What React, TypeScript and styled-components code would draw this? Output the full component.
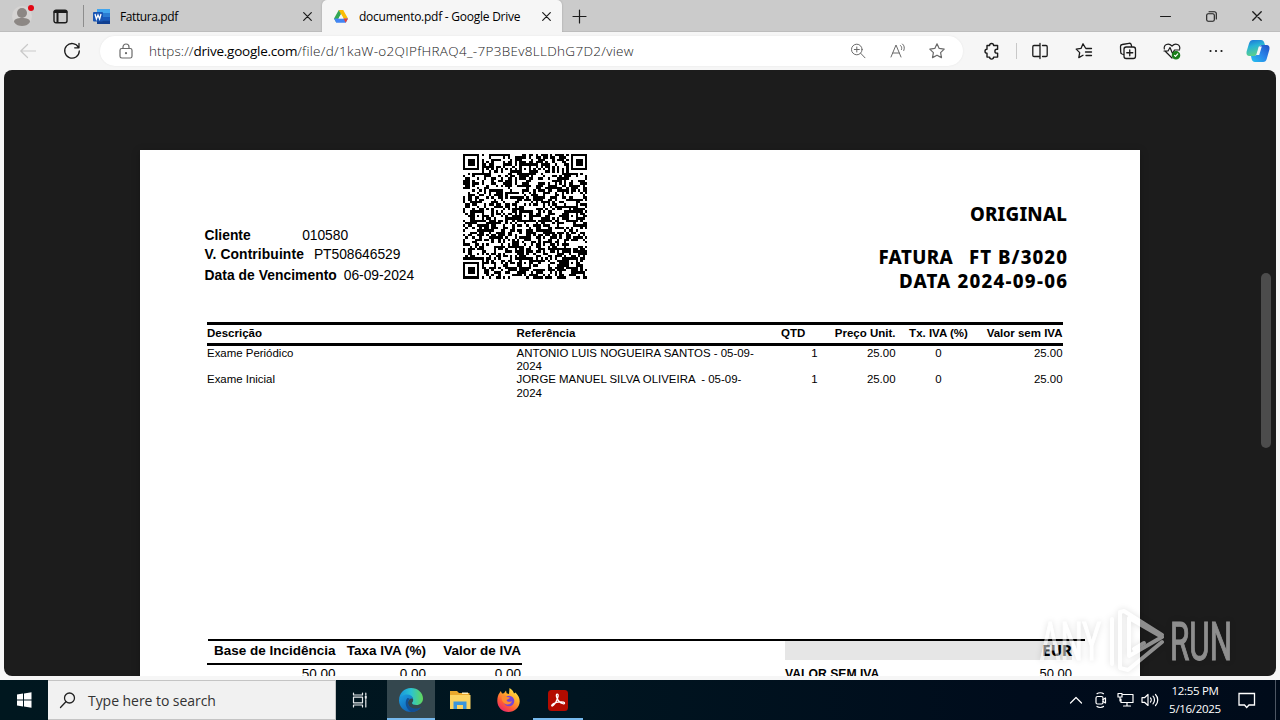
import React from "react";
import styled, { createGlobalStyle, css } from "styled-components";

const GlobalStyle = createGlobalStyle`
    * {
        box-sizing: border-box;
    }
    body {
        margin: 0;
        width: 1280px;
        height: 720px;
        overflow: hidden;
        background-color: #f6f6f6;
        font-family: "Open Sans", "Noto Sans", sans-serif;
    }
    svg {
        display: block;
        flex: none;
    }
`

const Screen = styled.div`
    position: relative;
    display: flex;
    flex-direction: column;
    width: 1280px;
    height: 720px;
    overflow: hidden;
`

/* browser tabs */
const TabStrip = styled.header`
    display: flex;
    height: 32px;
    flex: none;
    background-color: #cbcbcb;
    box-shadow: inset 0 -1px 0 #bdbdbd;
`
const TabTools = styled.div`
    display: flex;
    align-items: center;
    width: 84px;
    padding-left: 12px;
    gap: 19px;
    border-right: 1px solid #8d8d8d;
    margin: 5px 0;
    height: 22px;
`
const Tab = styled.div<{ $active?: boolean; $width: number }>`
    display: flex;
    align-items: center;
    width: ${(props) => props.$width}px;
    height: 32px;
    padding: 0 10px 0 9px;
    font-size: 12px;
    color: #1a1a1a;
    ${(props) => props.$active && css`
        background-color: #f6f6f6;
        padding: 0 11px 0 12px;
        border-radius: 5px 5px 0 0;
        box-shadow: 0 0 2px #9c9c9c;
    `}
`
const TabTitle = styled.span<{ $spacing: number; $gap: number }>`
    flex: 1;
    margin-left: ${(props) => props.$gap}px;
    letter-spacing: ${(props) => props.$spacing}px;
    white-space: nowrap;
    color: #000;
`
const NewTab = styled.div`
    display: flex;
    align-items: center;
    padding-left: 10px;
    flex: 1;
`
const WindowButtons = styled.div`
    display: flex;
    align-items: center;
    gap: 35px;
    padding-right: 18px;
`

/* address row */
const Toolbar = styled.nav`
    display: flex;
    align-items: center;
    height: 38px;
    flex: none;
    padding: 0 9px 0 20px;
    background-color: #f6f6f6;
`
const NavButtons = styled.div`
    display: flex;
    align-items: center;
    gap: 27px;
    width: 80px;
`
const AddressBar = styled.div`
    display: flex;
    align-items: center;
    width: 863px;
    height: 30px;
    padding: 0 17px 0 19px;
    border-radius: 15px;
    background-color: #fff;
    box-shadow: 0 0 2px #e4e4e4;
`
const Url = styled.div`
    flex: 1;
    margin-left: 16px;
    font-size: 13.5px;
    font-weight: 300;
    letter-spacing: 0.31px;
    white-space: nowrap;
    color: #222;
    i {
        font-style: normal;
        letter-spacing: 0.1px;
    }
    b {
        font-weight: 400;
        letter-spacing: -0.25px;
        color: #000;
    }
`
const AddressIcons = styled.div`
    display: flex;
    align-items: center;
    gap: 22px;
`
const BrowserIcons = styled.div`
    display: flex;
    align-items: center;
    flex: 1;
    gap: 26px;
    padding-left: 20px;
`
const Separator = styled.i`
    width: 1px;
    height: 16px;
    margin: 0 -12px 0 -11px;
    background-color: #c8c8c8;
`
const MenuDots = styled.div`
    margin: 0 -3px 0 2px;
`

/* document viewer */
const Viewer = styled.main`
    position: relative;
    height: 606px;
    flex: none;
    margin: 0 4px;
    padding-top: 80px;
    overflow: hidden;
    border-radius: 8px;
    background-color: #1c1c1c;
`
const Sheet = styled.article`
    display: flex;
    flex-direction: column;
    width: 1000px;
    height: 700px;
    margin: 0 auto;
    background-color: #fff;
    color: #000;
    font-family: "Liberation Sans", Arial, sans-serif;
    box-shadow: 0 2px 8px rgba(0, 0, 0, 0.25);
`
const ScrollThumb = styled.div`
    position: absolute;
    top: 203px;
    right: 5px;
    width: 10px;
    height: 175px;
    border-radius: 5px;
    background-color: #4c4c4c;
`
const SheetHead = styled.section`
    display: grid;
    grid-template-columns: 258px 1fr 300px;
    height: 172px;
    padding: 0 73px 0 64.5px;
`
const ClientInfo = styled.div`
    padding-top: 76px;
    font-size: 13.85px;
`
const ClientRow = styled.div<{ $height: number; $gap: number; $spacing?: number }>`
    display: flex;
    height: ${(props) => props.$height}px;
    gap: ${(props) => props.$gap}px;
    line-height: 18px;
    white-space: nowrap;
    b {
        letter-spacing: ${(props) => props.$spacing || 0}px;
    }
    span {
        letter-spacing: -0.05px;
    }
`
const QrBox = styled.div`
    padding-top: 4px;
`
const InvoiceTitle = styled.div`
    padding-top: 52px;
    text-align: right;
    font-family: "Noto Sans", Tahoma, sans-serif;
    font-weight: 800;
    font-size: 18.7px;
    line-height: 24.5px;
    white-space: pre;
`
const TitleLine = styled.div<{ $spacing: number; $value?: number; $after?: number }>`
    letter-spacing: ${(props) => props.$spacing}px;
    margin-right: ${(props) => -(props.$value || props.$spacing)}px;
    margin-bottom: ${(props) => props.$after || 0}px;
    span {
        letter-spacing: ${(props) => props.$value}px;
    }
`
const ItemGrid = styled.div`
    display: grid;
    grid-template-columns: 309.5px 264.5px 36.5px 78px 86px 81px;
    white-space: pre;
`
const Items = styled.section`
    width: 856px;
    margin-left: 67px;
    height: 317px;
    font-size: 11.45px;
    line-height: 13.2px;
`
const ItemHead = styled(ItemGrid)`
    height: 24px;
    border-top: 3px solid #000;
    border-bottom: 3px solid #000;
    margin-bottom: 1px;
    font-weight: 700;
    font-size: 11.5px;
    line-height: 16px;
`
const Cell = styled.div<{ $align?: string }>`
    text-align: ${(props) => props.$align || "left"};
`
const Totals = styled.section`
    display: flex;
    justify-content: space-between;
    width: 877px;
    margin-left: 68px;
    border-top: 2px solid #000;
    padding-right: 13px;
`
const TaxTable = styled.div`
    width: 315px;
    margin-left: -1px;
    font-size: 13.5px;
`
const TaxRow = styled.div<{ $head?: boolean }>`
    display: grid;
    grid-template-columns: 128.5px 90.5px 95px;
    text-align: right;
    white-space: nowrap;
    height: 24px;
    line-height: 17px;
    ${(props) => props.$head && css`
        height: 24px;
        line-height: 19px;
        font-weight: 700;
        border-bottom: 2px solid #000;
    `}
`
const SumBox = styled.div`
    width: 287px;
    font-size: 13px;
`
const Currency = styled.div`
    height: 19px;
    background-color: #e6e6e6;
    text-align: right;
    font-family: "Noto Sans", Tahoma, sans-serif;
    font-weight: 800;
    font-size: 15px;
    line-height: 18px;
`
const SumRow = styled.div`
    display: flex;
    justify-content: space-between;
    padding-top: 6px;
    line-height: 16px;
    b {
        font-size: 12.2px;
    }
`
const Watermark = styled.svg`
    position: absolute;
    left: 1032px;
    top: 600px;
    filter: drop-shadow(0 0 3px rgba(0, 0, 0, 0.25));
`

/* windows taskbar */
const Taskbar = styled.footer`
    display: flex;
    height: 40px;
    flex: none;
    margin-top: 4px;
    background: linear-gradient(90deg, #00171f 0%, #001520 45%, #000c1c 80%, #000b1a 100%);
    color: #fff;
`
const StartButton = styled.div`
    display: flex;
    align-items: center;
    justify-content: center;
    width: 48px;
`
const SearchBox = styled.div`
    display: flex;
    align-items: center;
    width: 288px;
    padding-left: 11px;
    gap: 12px;
    background-color: #f1f1f1;
    border: 1px solid #c4c4c4;
    border-left: 0;
    color: #333;
    font-size: 14px;
    letter-spacing: -0.05px;
`
const TaskButton = styled.div<{ $width?: number; $state?: string }>`
    display: flex;
    align-items: center;
    justify-content: center;
    width: ${(props) => props.$width || 49}px;
    background-color: ${(props) => props.$state === "active" ? "#34474e" : "transparent"};
    box-shadow: ${(props) => props.$state ? "inset 0 -2px 0 #76b9ed" : "none"};
`
const TaskViewButton = styled(TaskButton)`
    padding-right: 4px;
`
const Tray = styled.div`
    display: flex;
    align-items: center;
    margin-left: auto;
    gap: 7px;
`
const Clock = styled.div`
    width: 54px;
    margin: 0 9px 0 2px;
    text-align: center;
    font-size: 11.5px;
    line-height: 18px;
    letter-spacing: -0.3px;
    white-space: nowrap;
`
const DesktopEdge = styled.i`
    width: 5px;
    height: 40px;
    margin-left: 12px;
    border-left: 1px solid #4d5663;
`

const Icon = ({ w = 18, h = w, box, color = "#1b1b1b", stroke = 1.2, children }: any): JSX.Element => (
    <svg width={w} height={h} viewBox={box || `0 0 ${w} ${h}`} fill="none" stroke={color} strokeWidth={stroke} strokeLinecap="round" strokeLinejoin="round">
        {children}
    </svg>
)

const CloseIcon = ({ size = 9 }): JSX.Element => (
    <Icon w={size} box="0 0 9 9"><path d="M.7.7l7.6 7.6M8.3.7L.7 8.3" /></Icon>
)

const STAR = "M9 1.8l2.2 4.6 5 .7-3.6 3.5.9 5L9 13.2l-4.5 2.4.9-5L1.8 7.1l5-.7z";

const QR_SIZE = 53;

// finder, timing and alignment marks are fixed, the rest is filled by a seeded generator
function buildQrPath(): string {
    let seed = 580646529;
    let path = "";
    const ring = (dx: number, dy: number) => Math.max(Math.abs(dx), Math.abs(dy));
    const marks = [6, 26, 46];
    for (let y = 0; y < QR_SIZE; y++) {
        for (let x = 0; x < QR_SIZE; x++) {
            seed = (Math.imul(seed, 1664525) + 1013904223) >>> 0;
            let dark = (seed >>> 16) % 100 < 50;
            if (x === 6 || y === 6) dark = (x + y) % 2 === 0;
            marks.forEach((my) => marks.forEach((mx) => {
                const d = ring(x - mx, y - my);
                if (d <= 2) dark = d !== 1;
            }));
            [[3, 3], [QR_SIZE - 4, 3], [3, QR_SIZE - 4]].forEach(([cx, cy]) => {
                const d = ring(x - cx, y - cy);
                if (d <= 4) dark = d !== 2 && d !== 4;
            });
            if (dark) path += `M${x} ${y}h1v1h-1z`;
        }
    }
    return path;
}

const qrPath = buildQrPath();

const items = [
    { name: "Exame Periódico", ref: "ANTONIO LUIS NOGUEIRA SANTOS - 05-09-\n2024", qty: "1", price: "25.00", tax: "0", total: "25.00" },
    { name: "Exame Inicial", ref: "JORGE MANUEL SILVA OLIVEIRA  - 05-09-\n2024", qty: "1", price: "25.00", tax: "0", total: "25.00" },
];

function Tabs(): JSX.Element {
    return (
        <TabStrip>
            <TabTools>
                <svg width="22" height="24" viewBox="0 0 22 24">
                    <circle cx="10" cy="12" r="10" fill="#d6d4d3" />
                    <circle cx="10" cy="9" r="5" fill="#8c8784" />
                    <path d="M2 18c0-3 3-4 8-4s8 1 8 4c-2 3-5 4-8 4s-6-1-8-4z" fill="#8c8784" />
                    <circle cx="19" cy="4" r="3" fill="#e30613" />
                </svg>
                <Icon w={15} stroke={1.4}>
                    <rect x="1" y="1.2" width="13" height="12.6" rx="2" />
                    <path d="M1.5 3h12M4.5 4v9" strokeWidth="2" />
                </Icon>
            </TabTools>
            <Tab $width={238}>
                <svg width="17" height="17" viewBox="0 0 17 17">
                    <rect x="4" y="1" width="13" height="15" rx="1" fill="#2b7cd3" />
                    <path d="M4 1h13v4H4z" fill="#41a5ee" />
                    <path d="M4 9h13v3.5H4z" fill="#185abd" />
                    <path d="M4 12.5h13V16H4z" fill="#103f91" />
                    <rect y="4" width="10" height="9.5" rx="1" fill="#1a56b4" />
                    <path d="M2 6l1.4 5L5 7l1.6 4L8 6" fill="none" stroke="#fff" strokeWidth="1.3" />
                </svg>
                <TabTitle $gap={10} $spacing={-0.4}>Fattura.pdf</TabTitle>
                <CloseIcon />
            </Tab>
            <Tab $active $width={240}>
                <svg width="14" height="13" viewBox="0 0 14 13">
                    <path d="M4.8 0h4.4L7 4.2z" fill="#188038" />
                    <path d="M4.8 0L0 8.5l2.3 4L7 4.2z" fill="#34a853" />
                    <path d="M9.2 0L14 8.5H9.5L4.8 0z" fill="#fbbc04" />
                    <path d="M0 8.5h14l-2.3 4.2H2.3z" fill="#4285f4" />
                    <path d="M9.5 8.5H14l-2.3 4.2z" fill="#ea4335" />
                    <path d="M7 4.2l2.5 4.3h-5z" fill="#f6f6f6" />
                </svg>
                <TabTitle $gap={11} $spacing={-0.25}>documento.pdf - Google Drive</TabTitle>
                <CloseIcon />
            </Tab>
            <NewTab>
                <Icon w={15}><path d="M7.5 1v13M1 7.5h13" /></Icon>
            </NewTab>
            <WindowButtons>
                <Icon w={11} stroke={1}><path d="M.5 5.5h10" /></Icon>
                <Icon w={11} stroke={1.1}>
                    <rect x=".7" y="2.7" width="7.6" height="7.6" rx="1.5" />
                    <path d="M3 .7h5.3a2 2 0 0 1 2 2V8" />
                </Icon>
                <CloseIcon size={10} />
            </WindowButtons>
        </TabStrip>
    )
}

function AddressRow(): JSX.Element {
    return (
        <Toolbar>
            <NavButtons>
                <Icon w={16} color="#c9c9c9"><path d="M15.5 8H.8M7.5 1.5L.8 8l6.7 6.5" /></Icon>
                <Icon w={18} stroke={1.3}><path d="M15.5 5.5A7.3 7.3 0 1 0 16.3 9M16 1.5v4.3h-4.3" /></Icon>
            </NavButtons>
            <AddressBar>
                <Icon w={14} h={16} color="#6a6a6a">
                    <rect x="1" y="5.5" width="12" height="9.5" rx="1.8" />
                    <path d="M4 5.5V4a3 3 0 0 1 6 0v1.5" />
                    <circle cx="7" cy="10.2" r=".5" />
                </Icon>
                <Url><i>https://</i><b>drive.google.com</b>/file/d/1kaW-o2QIPfHRAQ4_-7P3BEv8LLDhG7D2/view</Url>
                <AddressIcons>
                    <Icon w={16} color="#6a6a6a" stroke={1}>
                        <circle cx="6.8" cy="6.5" r="5.3" />
                        <path d="M10.7 10.3l4.3 4.5M4.3 6.5h5M6.8 4v5" />
                    </Icon>
                    <Icon w={18} color="#6a6a6a" stroke={1}>
                        <path d="M3 15L8 3l5 12M4.8 11h6.4M12.5 3.5c1.2 1 1.5 2.3 1 4M14.5 2c1.9 1.5 2.3 4 1.3 6.5" />
                    </Icon>
                    <Icon w={18} color="#6a6a6a"><path d={STAR} /></Icon>
                </AddressIcons>
            </AddressBar>
            <BrowserIcons>
                <Icon w={18} stroke={1.4}>
                    <path d="M4 3.500h2.600a2 2 0 0 1 4 0h4v3.800h-.8a1.900 1.900 0 0 0 0 3.800h.8v4h-4a2 2 0 0 1-4 0H4v-3.800a2 2 0 0 1 0-4z" />
                </Icon>
                <Separator />
                <Icon w={18} stroke={1.3}>
                    <path d="M9 3.5H3a1.2 1.2 0 0 0-1.2 1.2v8.6A1.2 1.2 0 0 0 3 14.5h6M11.5 3.5H15a1.2 1.2 0 0 1 1.2 1.2v8.6a1.2 1.2 0 0 1-1.2 1.2h-3.5M9 1.5v15" />
                </Icon>
                <Icon w={18} stroke={1.3}>
                    <path d="M10.5 6L8 1.8 6 6.4 1.2 7.1l3.5 3.5-.9 5L8 13.2M11 6.500h5.500M10.500 10h6M11 13.500h5.500" />
                </Icon>
                <Icon w={18} stroke={1.3}>
                    <path d="M4.5 12.5L3 12a2 2 0 0 1-1.3-2L1.500 4.500a2 2 0 0 1 1.700-2L10 1.300a2 2 0 0 1 2.300 1.500l.3 1.500" />
                    <rect x="5" y="5" width="11.5" height="11.5" rx="2.2" />
                    <path d="M10.75 7.8v6M7.75 10.75h6" />
                </Icon>
                <Icon w={18} stroke={1.2}>
                    <path d="M9 16L2 9M1.3 7C.5 2.500 5.500 .5 9 4c3.500-3.500 8.500-1.500 7.700 3M1 9h4l2-3.500 2.500 6L11.500 8h5" />
                    <circle cx="13" cy="13.2" r="3.7" fill="#1a7f1a" stroke="#1a7f1a" />
                    <path d="M11.5 13.4l1 1 2.2-2.5" stroke="#fff" />
                </Icon>
                <MenuDots>
                    <Icon w={14} h={4} stroke={2.2}><path d="M1.5 2h.01M7 2h.01M12.5 2h.01" /></Icon>
                </MenuDots>
                <svg width="24" height="24" viewBox="0 0 24 24">
                    <defs>
                        <linearGradient id="cpA" x1="0" y1="0" x2=".3" y2="1">
                            <stop offset="0" stopColor="#1c6fd8" />
                            <stop offset=".45" stopColor="#28b3d6" />
                            <stop offset="1" stopColor="#5bd08c" />
                        </linearGradient>
                        <linearGradient id="cpB" x1="1" y1="0" x2="0" y2="1">
                            <stop offset="0" stopColor="#1f4fc4" />
                            <stop offset=".5" stopColor="#2a86ea" />
                            <stop offset="1" stopColor="#25c3ee" />
                        </linearGradient>
                    </defs>
                    <path d="M7 1h8c2 0 3 1.5 3.5 3.5L19 6h-3c-2 0-2.5 1-3 2.5L11 15c-.6 1.5-1.5 2-3 2H3.500C1 17 0 15 .6 12.500L3 4.500C3.800 2 5 1 7 1z" fill="url(#cpA)" />
                    <path d="M17 23H9c-2 0-3-1.5-3.5-3.5L5 17h3c2 0 2.5-1 3-2.5L13 8.500C13.600 7 14.500 6 16 6h4.500c2.500 0 3.500 2 2.900 4.500L21 19c-.8 3-2 4-4 4z" fill="url(#cpB)" />
                    <path d="M12.8 7.5h3l-2.6 8.5h-3z" fill="#f6f6f6" />
                </svg>
            </BrowserIcons>
        </Toolbar>
    )
}

function Invoice(): JSX.Element {
    return (
        <Sheet>
            <SheetHead>
                <ClientInfo>
                    <ClientRow $height={19} $gap={51.5}><b>Cliente</b><span>010580</span></ClientRow>
                    <ClientRow $height={21} $gap={10} $spacing={0.1}><b>V. Contribuinte</b><span>PT508646529</span></ClientRow>
                    <ClientRow $height={19} $gap={7} $spacing={0.04}><b>Data de Vencimento</b><span>06-09-2024</span></ClientRow>
                </ClientInfo>
                <QrBox>
                    <svg width="124.5" height="124.5" viewBox={`0 0 ${QR_SIZE} ${QR_SIZE}`} shapeRendering="crispEdges">
                        <path d={qrPath} fill="#000" />
                    </svg>
                </QrBox>
                <InvoiceTitle>
                    <TitleLine $spacing={0.2} $after={18}>ORIGINAL</TitleLine>
                    <TitleLine $spacing={0.4} $value={1.05}>FATURA   <span>FT B/3020</span></TitleLine>
                    <TitleLine $spacing={1.1} $value={1.25}>DATA <span>2024-09-06</span></TitleLine>
                </InvoiceTitle>
            </SheetHead>
            <Items>
                <ItemHead>
                    <Cell>Descrição</Cell>
                    <Cell>Referência</Cell>
                    <Cell>QTD</Cell>
                    <Cell $align="right">Preço Unit.</Cell>
                    <Cell $align="center">Tx. IVA (%)</Cell>
                    <Cell $align="right">Valor sem IVA</Cell>
                </ItemHead>
                {items.map((item) => (
                    <ItemGrid key={item.name}>
                        <Cell>{item.name}</Cell>
                        <Cell>{item.ref}</Cell>
                        <Cell $align="right">{item.qty}</Cell>
                        <Cell $align="right">{item.price}</Cell>
                        <Cell $align="center">{item.tax}</Cell>
                        <Cell $align="right">{item.total}</Cell>
                    </ItemGrid>
                ))}
            </Items>
            <Totals>
                <TaxTable>
                    <TaxRow $head><span>Base de Incidência</span><span>Taxa IVA (%)</span><span>Valor de IVA</span></TaxRow>
                    <TaxRow><span>50.00</span><span>0.00</span><span>0.00</span></TaxRow>
                </TaxTable>
                <SumBox>
                    <Currency>EUR</Currency>
                    <SumRow><b>VALOR SEM IVA</b><span>50.00</span></SumRow>
                </SumBox>
            </Totals>
        </Sheet>
    )
}

function WindowsBar(): JSX.Element {
    return (
        <Taskbar>
            <StartButton>
                <svg width="16" height="16" viewBox="0 0 16 16" fill="#fff">
                    <path d="M1 2.5l6-.9v6H1zM8 1.500L15.500.3v7.300H8zM1 8.500h6v6l-6-.9zM8 8.500h7.500v7.200L8 14.600z" />
                </svg>
            </StartButton>
            <SearchBox>
                <Icon w={17} color="#222" stroke={1.3}><circle cx="10.5" cy="6" r="5" /><path d="M6.9 9.8L1.5 15.5" /></Icon>
                Type here to search
            </SearchBox>
            <TaskViewButton $width={51}>
                <Icon w={16} color="#e6eaec" stroke={1.2}>
                    <path d="M1.5 1v2h9V1M1.5 15v-2h9v2M1.5 5.2h9v5.6h-9zM13.8 1v2M13.8 7.5V15" />
                    <path d="M13.8 4.5v1.5" strokeWidth="2" />
                </Icon>
            </TaskViewButton>
            <TaskButton $width={48} $state="active">
                <svg width="24" height="24" viewBox="0 0 24 24">
                    <defs>
                        <linearGradient id="edgeTop" x1="0" y1=".5" x2="1" y2=".5">
                            <stop offset="0" stopColor="#1794dc" />
                            <stop offset=".5" stopColor="#2bc3d2" />
                            <stop offset="1" stopColor="#62d85a" />
                        </linearGradient>
                        <linearGradient id="edgeLow" x1="0" y1="0" x2=".8" y2="1">
                            <stop offset="0" stopColor="#1ba0e2" />
                            <stop offset="1" stopColor="#0f56ad" />
                        </linearGradient>
                    </defs>
                    <path d="M0 12C.3 5 5 0 12 0c7 0 12 5 12 10.5 0 4-3 6.5-6.5 6.5-3 0-4.5-1-4.500-2 0-.7 1.200-1.200 1.200-3C14.200 9.500 12 7.500 8.500 7.500 4 7.500.8 9.500 0 12z" fill="url(#edgeTop)" />
                    <path d="M0 12c.5-3 4-5.5 8-5.5 3.5 0 5.8 2 6.2 4.500C12 9.600 9 11.500 9 15c0 3.500 3.500 6 7.500 6 2.500 0 4.200-1 5.500-1.800C20 22.200 16.500 24 12 24 5 24-.2 18.500 0 12z" fill="url(#edgeLow)" />
                    <path d="M8.5 10c-3 3-2.5 10 3.5 14 4 0 8-1.8 10-4.8-1.3.8-3 1.3-5.5 1.3-4 0-7.5-2.5-7.5-5.5 0-2 .8-3 1.500-4.500z" fill="#124f94" />
                </svg>
            </TaskButton>
            <TaskButton>
                <svg width="22" height="20" viewBox="0 0 22 20">
                    <path d="M1 1h7l2 2h10.5v15.5H1z" fill="#e9a82c" />
                    <path d="M1 5h20.5v14H1z" fill="#fcd462" />
                    <path d="M4.5 19v-7.5h13V19h-3.5v-4h-6v4z" fill="#3c96dc" />
                    <path d="M13 2.5h6V4h-6z" fill="#fff1bd" />
                </svg>
            </TaskButton>
            <TaskButton>
                <svg width="23" height="24" viewBox="0 0 23 24">
                    <defs>
                        <linearGradient id="fox" x1=".85" y1="0" x2=".2" y2="1">
                            <stop offset="0" stopColor="#fff04a" />
                            <stop offset=".4" stopColor="#ffa62b" />
                            <stop offset=".7" stopColor="#ff5a36" />
                            <stop offset="1" stopColor="#e72173" />
                        </linearGradient>
                    </defs>
                    <path d="M2.5 5l1.3-2 1.2 2.5L7 5.3 9 2.5l.6 2.7L12 6l.5-6c2.5 1.5 4 3.5 4.5 5.5l1.5-1c3 3 4.3 6 4.2 9C22.500 19.500 17.500 24 11.500 24S.3 19.500.3 13C.3 9.500 1 7 2.500 5z" fill="url(#fox)" />
                    <circle cx="12" cy="13" r="5.3" fill="#7545d8" />
                    <path d="M5 8c2-.8 4-.3 5 1l3 .5c-.3 1.5-2.5 1.5-3.5 2.5.4 2 3.5 2.5 5.5 1-1 3.5-5 4.500-7.500 2.500C5 13.500 4 10.500 5 8z" fill="#ff8c2e" />
                </svg>
            </TaskButton>
            <TaskButton $width={50} $state="open">
                <svg width="20" height="21" viewBox="0 0 20 21">
                    <rect width="20" height="21" rx="3.5" fill="#b30b00" />
                    <path d="M9 4.2c1.8-.4 1.5 3-1 7.5-1.5 2.8-3.5 5-4.2 4.2-.8-1 3-3.6 8-4 3.5-.3 5 .5 4.700 1.400-.4 1.200-3.700 0-5.500-2C8.800 9 7.500 4.500 9 4.200z" fill="none" stroke="#fff" strokeWidth="1.3" />
                </svg>
            </TaskButton>
            <Tray>
                <Icon w={14} h={10} color="#fff" stroke={1.2}><path d="M1.5 8L7 2.5 12.5 8" /></Icon>
                <Icon w={20} h={18} color="#fff" stroke={1.2}>
                    <rect x="6" y="5.5" width="7" height="7.5" rx="1.5" />
                    <path d="M13 8.5l2.5-1.500v5L13 10.500M7 2.700c1.500-1.300 5-1.300 6.500 0M7 15.500c1.500 1.300 5 1.300 6.500 0" />
                </Icon>
                <Icon w={17} h={16} color="#fff" stroke={1.2}>
                    <path d="M6 2.5h10v8H4V7M10 10.5v3.5M6.5 14h7M1 1.5h4v3.5H1zM3 5v4" />
                </Icon>
                <Icon w={18} h={16} color="#fff" stroke={1.2}>
                    <path d="M1 5.7h2.5L7 2.5v11l-3.5-3.2H1zM9.5 6c1 1 1 3 0 4M12 4.2c2 2 2 5.6 0 7.6M14.5 2.5c3 3 3 8 0 11" />
                </Icon>
                <Clock>12:55 PM<br />5/16/2025</Clock>
                <Icon w={18} color="#fff" stroke={1.3}><path d="M1 2.5h15.5V14H11l-2.3 2.5L6.500 14H1z" strokeLinejoin="miter" /></Icon>
                <DesktopEdge />
            </Tray>
        </Taskbar>
    )
}

function App(): JSX.Element {
    return (
        <>
            <GlobalStyle />
            <Screen>
                <Tabs />
                <AddressRow />
                <Viewer>
                    <Invoice />
                    <ScrollThumb />
                </Viewer>
                <WindowsBar />
                <Watermark width="204" height="76" viewBox="0 0 204 76" fontFamily="Roboto, sans-serif" fontSize="53" fill="#fff" opacity="0.5">
                    <g stroke="#fff" strokeWidth="1.2">
                        <text x="8" y="60" textLength="61" lengthAdjust="spacingAndGlyphs">ANY</text>
                        <text x="138" y="60" textLength="62" lengthAdjust="spacingAndGlyphs">RUN</text>
                    </g>
                    <g fill="none" stroke="#fff" strokeWidth="4" strokeLinejoin="round" strokeLinecap="round">
                        <path d="M80 64V19M88 12v56l8 2 34-28M88 12l4-1 38 24M97 22v34l33-19L97 18z" />
                        <path d="M102 49l10-6" />
                    </g>
                </Watermark>
            </Screen>
        </>
    )
}

export default App;
